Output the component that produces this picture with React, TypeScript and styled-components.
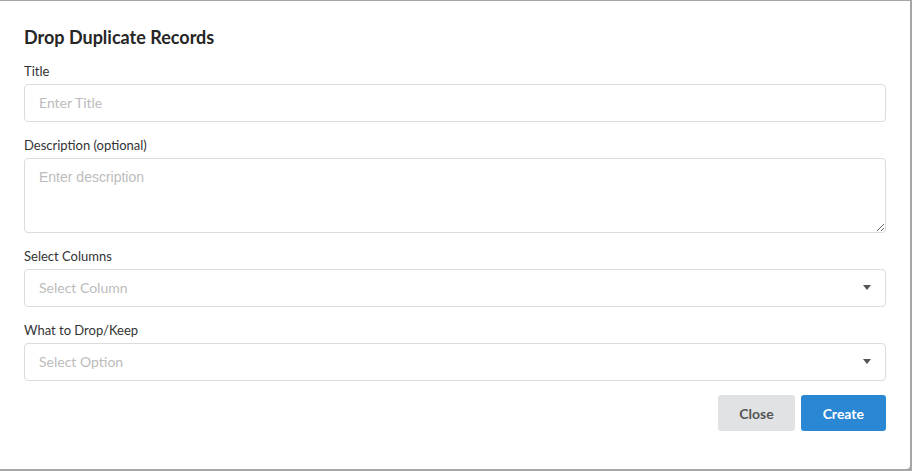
import React from 'react';
import styled, { createGlobalStyle } from 'styled-components';

const GlobalStyle = createGlobalStyle`
  html, body {
    margin: 0;
    padding: 0;
    background: #a6a6a6;
    height: 100%;
    overflow: hidden;
  }
  * {
    box-sizing: border-box;
  }
`;

function App() {
  return (
    <>
      <GlobalStyle />
      <Modal>
        <Heading>Drop Duplicate Records</Heading>
        <Field>
          <Label>Title</Label>
          <TextInput placeholder="Enter Title" />
        </Field>
        <Field>
          <Label>Description (optional)</Label>
          <TextArea placeholder="Enter description" />
        </Field>
        <Field>
          <Label>Select Columns</Label>
          <SelectBox>
            <Placeholder>Select Column</Placeholder>
            <Caret />
          </SelectBox>
        </Field>
        <Field>
          <Label>What to Drop/Keep</Label>
          <SelectBox>
            <Placeholder>Select Option</Placeholder>
            <Caret />
          </SelectBox>
        </Field>
        <Footer>
          <Button variant="secondary">Close</Button>
          <Button variant="primary">Create</Button>
        </Footer>
      </Modal>
    </>
  );
}

export default App;

const Modal = styled.div`
  width: 910px;
  height: 468px;
  margin-top: 1px;
  background: #fff;
  border-bottom-right-radius: 4px;
  padding: 24px 24px 0 24px;
  font-family: Lato, 'Noto Sans', sans-serif;
  color: #333;
  display: flex;
  flex-direction: column;
`;

const Heading = styled.h2`
  margin: 0 0 12px 0;
  font-size: 18px;
  line-height: 24px;
  font-weight: 700;
  color: #262626;
`;

const Field = styled.div`
  display: flex;
  flex-direction: column;
  margin-bottom: 13px;
`;

const Label = styled.label`
  font-size: 13px;
  line-height: 20px;
  color: #333;
  margin-bottom: 3px;
`;

const TextInput = styled.input`
  height: 38px;
  width: 100%;
  border: 1px solid #dcdcdc;
  border-radius: 4px;
  padding: 0 14px 1px 14px;
  font-family: Lato, 'Noto Sans', sans-serif;
  font-size: 14px;
  color: #333;
  outline: none;
  &::placeholder {
    color: #bcbcbc;
  }
`;

const TextArea = styled.textarea`
  height: 75px;
  width: 100%;
  border: 1px solid #dcdcdc;
  border-radius: 4px;
  padding: 10px 14px;
  font-family: 'Liberation Sans', Arial, sans-serif;
  font-size: 14px;
  color: #333;
  resize: vertical;
  outline: none;
  &::placeholder {
    color: #bcbcbc;
  }
`;

const SelectBox = styled.div`
  height: 38px;
  width: 100%;
  border: 1px solid #dcdcdc;
  border-radius: 4px;
  padding: 0 14px 1px 14px;
  display: flex;
  align-items: center;
  justify-content: space-between;
`;

const Placeholder = styled.span`
  font-size: 14px;
  color: #bcbcbc;
`;

const Caret = styled.span`
  width: 0;
  height: 0;
  border-left: 4px solid transparent;
  border-right: 4px solid transparent;
  border-top: 5px solid #555;
`;

const Footer = styled.div`
  display: flex;
  justify-content: flex-end;
  gap: 6px;
  margin-top: 1px;
`;

const Button = styled.button<{ variant: 'primary' | 'secondary' }>`
  height: 36px;
  padding: 0 ${({ variant }) => (variant === 'primary' ? '22px' : '21px')};
  border: none;
  border-radius: 3px;
  font-family: Lato, 'Noto Sans', sans-serif;
  font-size: 14px;
  font-weight: 700;
  cursor: pointer;
  background: ${({ variant }) => (variant === 'primary' ? '#2a87d3' : '#e1e2e4')};
  color: ${({ variant }) => (variant === 'primary' ? '#fff' : '#555')};
`;
